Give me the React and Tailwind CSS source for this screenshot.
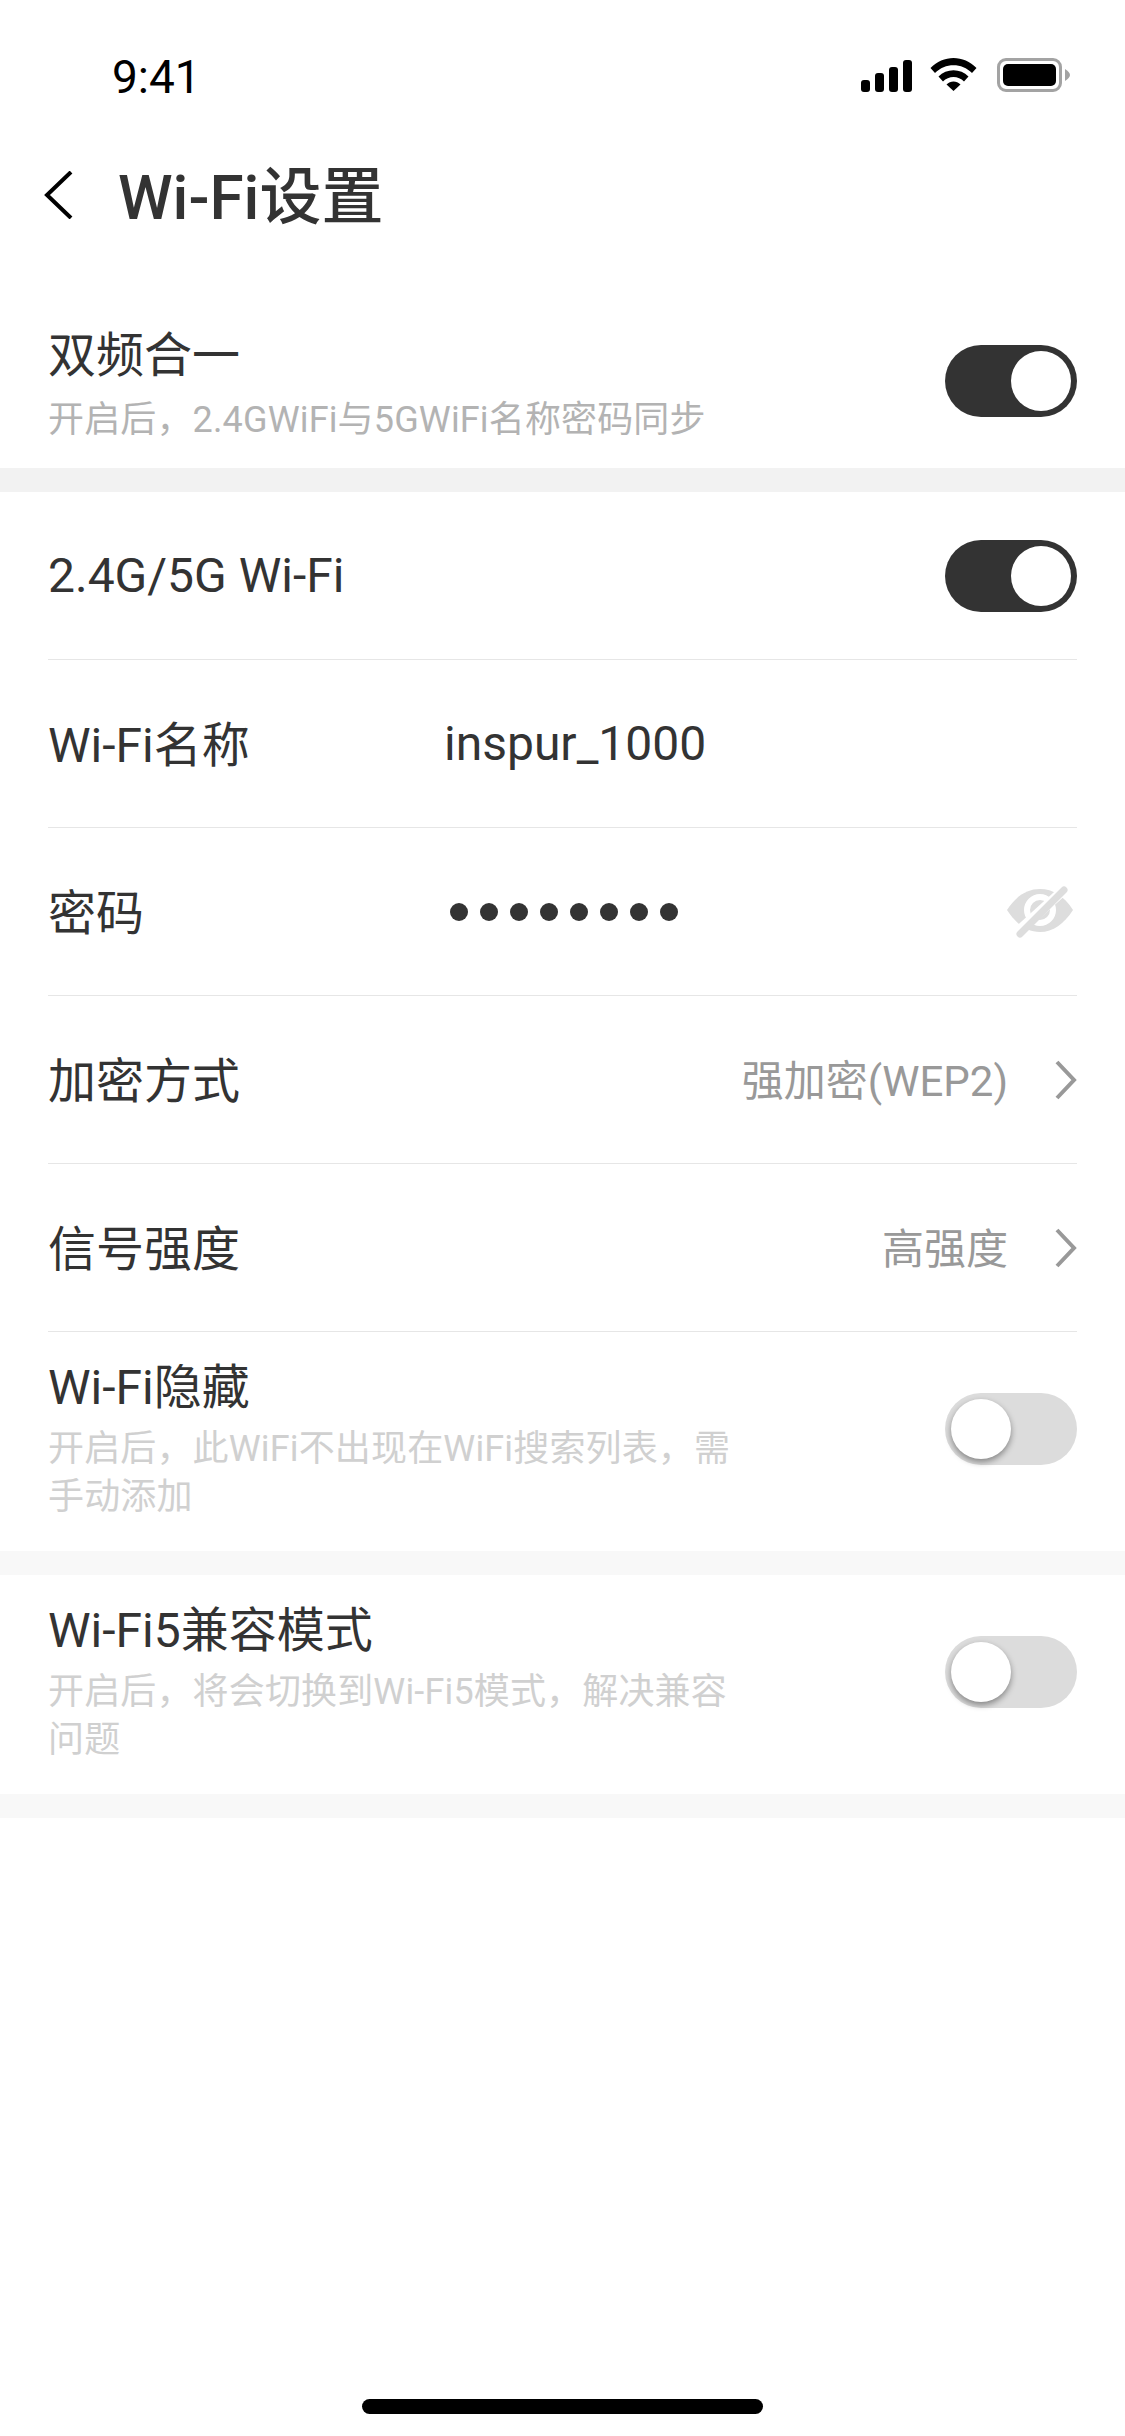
const cjk = "font-['Roboto','Noto_Sans_CJK_SC',sans-serif]";

function Toggle({ on }) {
  return on ? (
    <div className="w-[132px] h-[72px] rounded-full bg-[#333333] flex items-center justify-end pr-[6px] shrink-0">
      <div className="w-[60px] h-[60px] rounded-full bg-white" />
    </div>
  ) : (
    <div className="w-[132px] h-[72px] rounded-full bg-[#dcdcdc] flex items-center justify-start pl-[6px] shrink-0">
      <div className="w-[60px] h-[60px] rounded-full bg-white shadow-[0_3px_6px_rgba(0,0,0,0.4)]" />
    </div>
  );
}

function Chevron() {
  return (
    <svg width="22" height="40" viewBox="0 0 22 40" className="shrink-0">
      <path d="M2 2 L19 20 L2 38" fill="none" stroke="#999999" strokeWidth="4" />
    </svg>
  );
}

function Eye() {
  return (
    <svg width="68" height="52" viewBox="0 0 68 52" className="shrink-0">
      <path d="M1 24 C10 10 21 3 34 3 C47 3 58 10 67 24 C58 38 47 46 34 46 C21 46 10 38 1 24 Z" fill="#dddddd" />
      <circle cx="34" cy="24" r="13" fill="none" stroke="#ffffff" strokeWidth="6" />
      <path d="M8 49 L60 2" stroke="#ffffff" strokeWidth="10" />
      <path d="M14 48 L58 4" stroke="#dddddd" strokeWidth="7" strokeLinecap="round" />
    </svg>
  );
}

function StatusIcons() {
  return (
    <div className="flex items-start">
      <svg width="51" height="32" viewBox="0 0 51 32" className="mt-[3px]">
        <rect x="0" y="20" width="9" height="12" rx="3" fill="#000" />
        <rect x="14" y="13" width="9" height="19" rx="3" fill="#000" />
        <rect x="28" y="7" width="9" height="25" rx="3" fill="#000" />
        <rect x="42" y="0" width="9" height="32" rx="3" fill="#000" />
      </svg>
      <svg width="47" height="34" viewBox="0 0 47 34" className="ml-[18px]">
        <path d="M0.5 11 C13 -2.5 34 -2.5 46.5 11 L42 16 C32 5.5 15 5.5 5 16 Z" fill="#000" />
        <path d="M8.5 19.5 C16.5 11 30.5 11 38.5 19.5 L34 24.5 C28.5 18.5 18.5 18.5 13 24.5 Z" fill="#000" />
        <path d="M16.5 27.5 C20.5 23.5 26.5 23.5 30.5 27.5 L23.5 34 Z" fill="#000" />
      </svg>
      <div className="ml-[20px] mt-[1px] w-[65px] h-[34px] border-[3px] border-[#a3a3a3] rounded-[9px] p-[3px]">
        <div className="w-full h-full bg-black rounded-[5px]" />
      </div>
      <svg width="5" height="12" viewBox="0 0 5 12" className="ml-[3px] mt-[12px]">
        <path d="M0 0 C3 2 5 4 5 6 C5 8 3 10 0 12 Z" fill="#a3a3a3" />
      </svg>
    </div>
  );
}

function Divider() {
  return <div className="h-px bg-[#e6e6e6] mx-[48px]" />;
}

function Gap({ c = "bg-[#f8f8f8]" }) {
  return <div className={`h-[24px] ${c}`} />;
}

function Row({ children }) {
  return <div className="h-[167px] px-[48px] flex items-center">{children}</div>;
}

function Title({ children }) {
  return <div className="text-[48px] leading-[60px] text-[#333333] font-normal whitespace-nowrap">{children}</div>;
}

export default function App() {
  return (
    <div className={`w-[1125px] h-[2436px] bg-white relative overflow-hidden ${cjk}`}>
      <div className="h-[132px] pl-[112px] pr-[55px] pt-[52px] flex justify-between items-start">
        <div className="text-[46px] leading-[50px] text-black font-normal">9:41</div>
        <div className="mt-[5px]"><StatusIcons /></div>
      </div>

      <div className="h-[130px] pl-[44px] flex items-center">
        <svg width="30" height="48" viewBox="0 0 30 48" className="shrink-0 -mt-[4px]">
          <path d="M27 1 L3 24 L27 47" fill="none" stroke="#000000" strokeWidth="4" />
        </svg>
        <div className="ml-[44px] pt-[2px] text-[62px] leading-[72px] text-[#333333] font-medium">Wi-Fi设置</div>
      </div>

      <div className="h-[37px]" />

      <div className="h-[169px] px-[48px] pt-[27px] flex justify-between">
        <div>
          <Title>双频合一</Title>
          <div className="mt-[10px] text-[36px] tracking-[0.15px] leading-[48px] text-[#b3b3b3] font-normal whitespace-nowrap">开启后，2.4GWiFi与5GWiFi名称密码同步</div>
        </div>
        <div className="mt-[19px]"><Toggle on /></div>
      </div>
      <Gap c="bg-[#f2f2f2]" />

      <Row>
        <div className="pt-[1px]"><Title>2.4G/5G Wi-Fi</Title></div>
        <div className="ml-auto"><Toggle on /></div>
      </Row>
      <Divider />
      <Row>
        <div className="w-[396px] pt-[5px]"><Title>Wi-Fi名称</Title></div>
        <div className="text-[48px] pt-[1px] text-[#333333] font-normal">inspur_1000</div>
      </Row>
      <Divider />
      <Row>
        <div className="w-[402px] pt-[5px]"><Title>密码</Title></div>
        <div className="flex gap-[12px]">
          {[0, 1, 2, 3, 4, 5, 6, 7].map((i) => (
            <div key={i} className="w-[18px] h-[18px] rounded-full bg-[#333333]" />
          ))}
        </div>
        <div className="ml-auto mr-[3px]"><Eye /></div>
      </Row>
      <Divider />
      <Row>
        <div className="pt-[5px]"><Title>加密方式</Title></div>
        <div className="ml-auto pt-[3px] text-[42px] text-[#999999] font-normal">强加密(WEP2)</div>
        <div className="ml-[47px]"><Chevron /></div>
      </Row>
      <Divider />
      <Row>
        <div className="pt-[5px]"><Title>信号强度</Title></div>
        <div className="ml-auto pt-[3px] text-[42px] text-[#999999] font-normal">高强度</div>
        <div className="ml-[47px]"><Chevron /></div>
      </Row>
      <Divider />

      <div className="h-[219px] px-[48px] pt-[26px] flex justify-between">
        <div>
          <Title>Wi-Fi隐藏</Title>
          <div className="mt-[7px] w-[690px] text-[36px] tracking-[0.15px] leading-[48px] text-[#d0d0d0] font-normal">开启后，此WiFi不出现在WiFi搜索列表，需手动添加</div>
        </div>
        <div className="mt-[35px]"><Toggle /></div>
      </div>
      <Gap />
      <div className="h-[219px] px-[48px] pt-[26px] flex justify-between">
        <div>
          <Title>Wi-Fi5兼容模式</Title>
          <div className="mt-[7px] w-[690px] text-[36px] tracking-[0.15px] leading-[48px] text-[#d0d0d0] font-normal">开启后，将会切换到Wi-Fi5模式，解决兼容问题</div>
        </div>
        <div className="mt-[35px]"><Toggle /></div>
      </div>
      <Gap />

      <div className="absolute left-[362px] bottom-[22px] w-[401px] h-[15px] rounded-full bg-black" />
    </div>
  );
}
